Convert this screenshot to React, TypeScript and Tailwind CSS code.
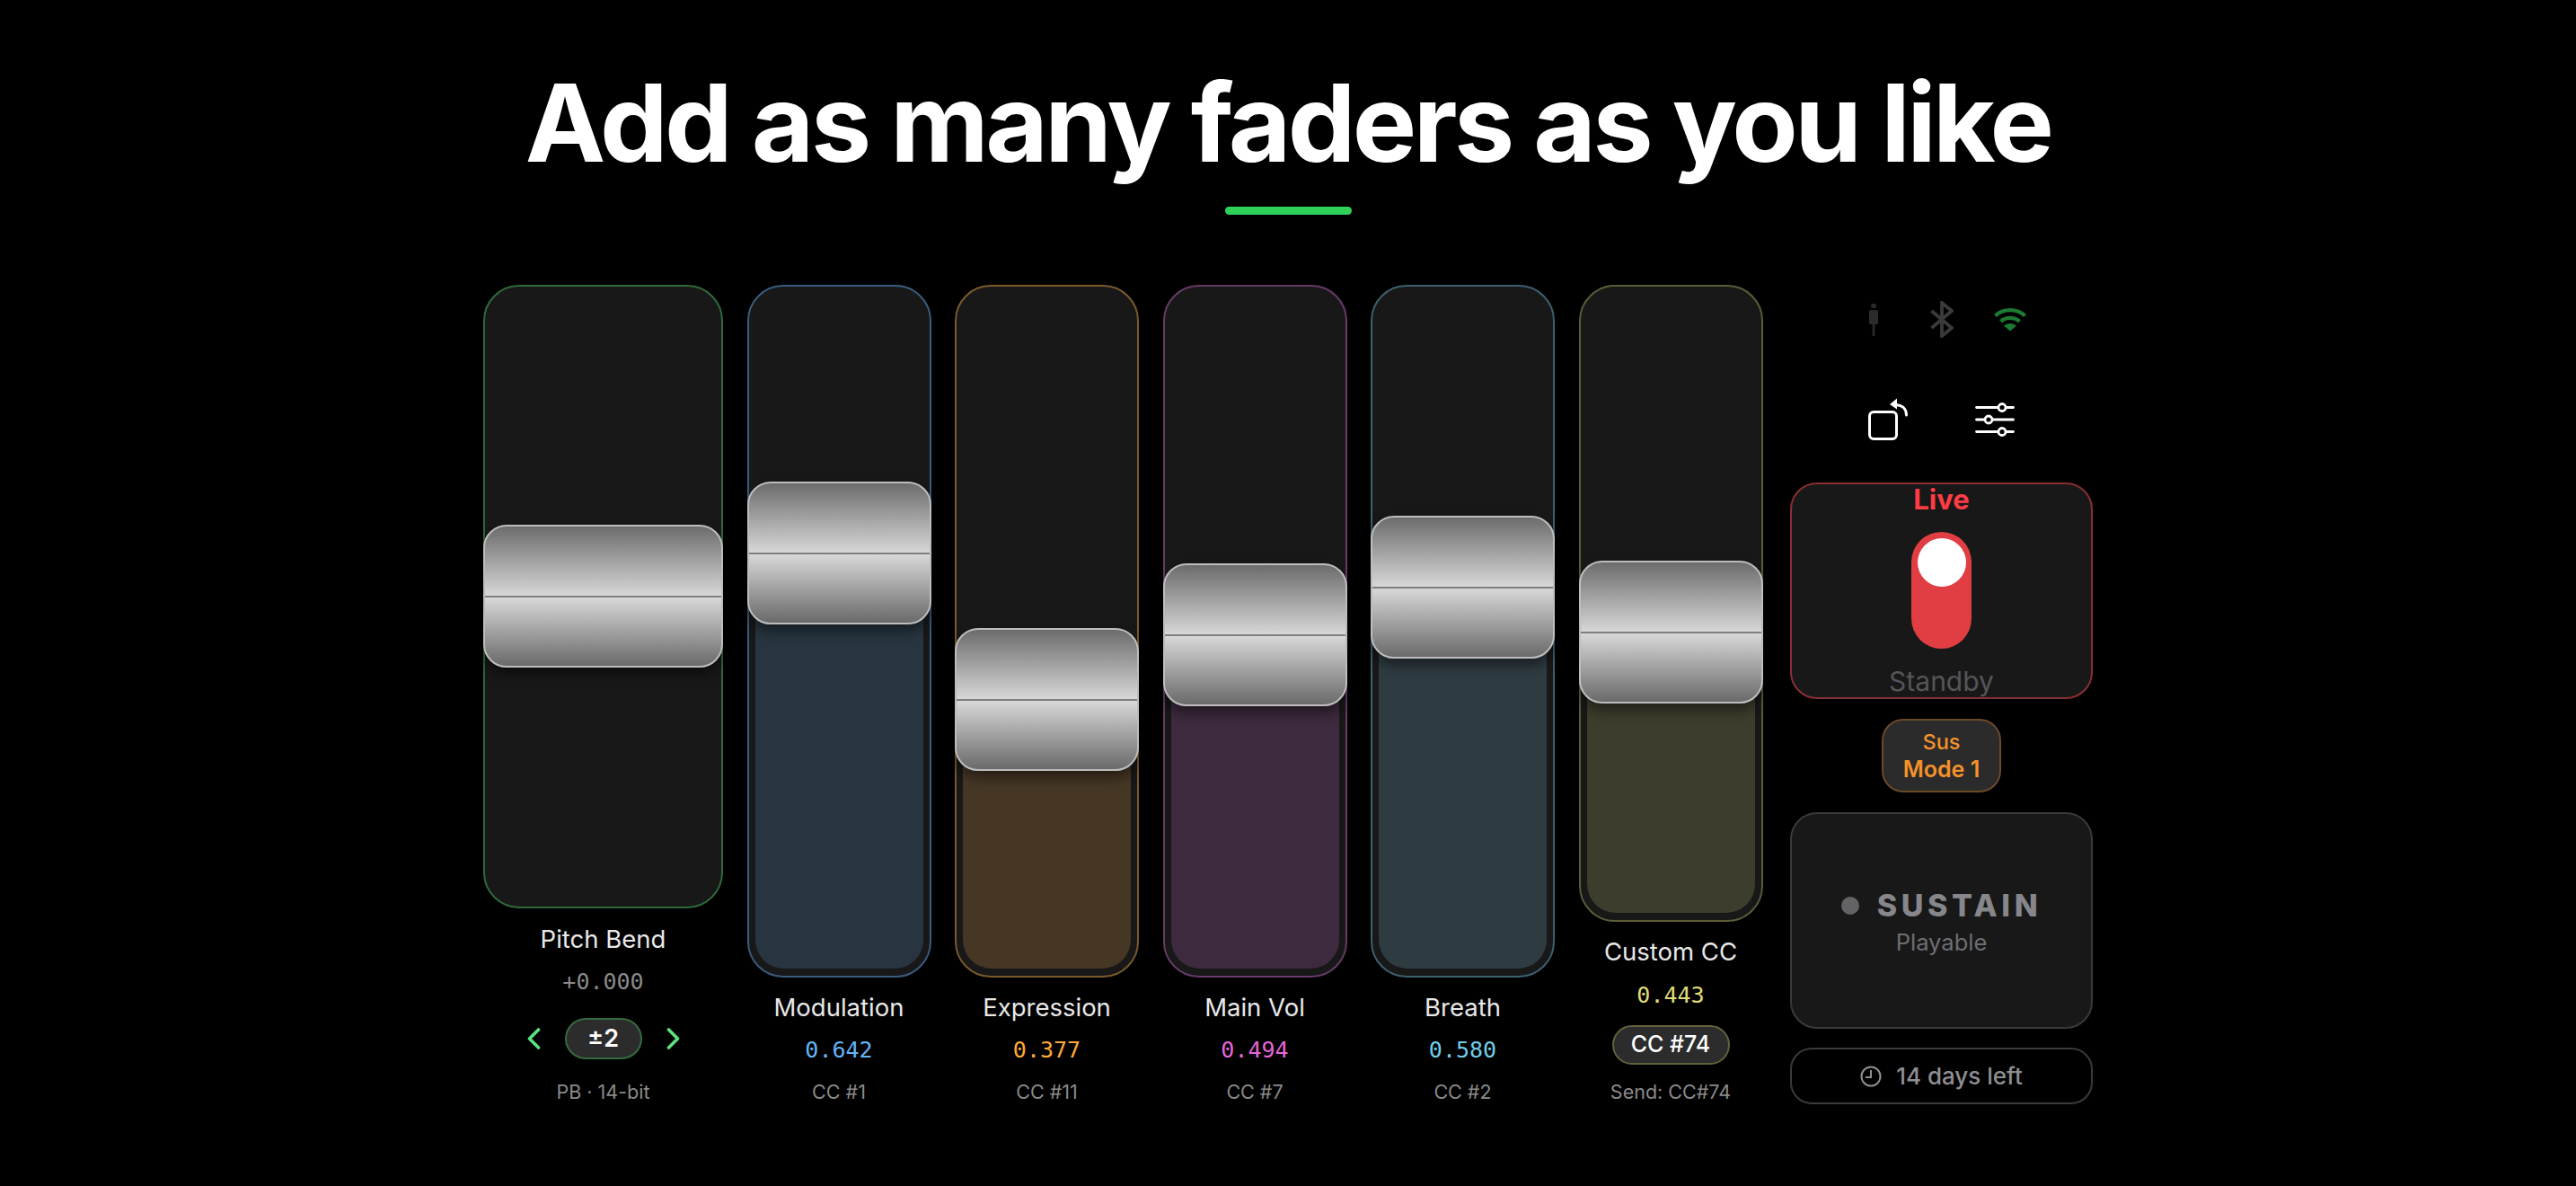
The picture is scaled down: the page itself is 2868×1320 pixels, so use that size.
import React from "react";

type F = {
  label: string; value: string; sub: string; trackH: number; thumbTop: number;
  track: string; fill: string; val: string; extra?: React.ReactNode; labelMt: string; valMt: string; subMt: string;
};

const Chevron = ({ right }: { right?: boolean }) => (
  <svg width="15" height="24" viewBox="0 0 15 24" fill="none" stroke="#5ce27f" strokeWidth="3.6" strokeLinecap="round" strokeLinejoin="round">
    <path d={right ? "M2.5 2 L12.5 12 L2.5 22" : "M12.5 2 L2.5 12 L12.5 22"} />
  </svg>
);

const PitchPill = () => (
  <div className="mt-[25px] flex items-center gap-[27px]">
    <Chevron />
    <div className="flex h-[46px] w-[86px] items-center justify-center rounded-[23px] border-2 border-[#356b40] bg-[#2c2c2c] text-[27px] font-semibold text-white">±2</div>
    <Chevron right />
  </div>
);

const CCPill = () => (
  <div className="mt-[18px] flex h-[44px] w-[131px] items-center justify-center rounded-[22px] border-2 border-[#63623c] bg-[#2c2c2c] text-[25px] font-medium text-white">CC #74</div>
);

const faders: F[] = [
  { label: "Pitch Bend", value: "+0.000", sub: "PB · 14-bit", trackH: 694, thumbTop: 267, track: "w-[267px] border-[#2f6a3b]", fill: "", val: "text-[#8a8a8a]", extra: <PitchPill />, labelMt: "mt-[17px]", valMt: "mt-[16px]", subMt: "mt-[24px]" },
  { label: "Modulation", value: "0.642", sub: "CC #1", trackH: 771, thumbTop: 219, track: "w-[205px] border-[#3a5c7e]", fill: "bg-[#283540]", val: "text-[#64b5f6]", labelMt: "mt-[16px]", valMt: "mt-[16px]", subMt: "mt-[19px]" },
  { label: "Expression", value: "0.377", sub: "CC #11", trackH: 771, thumbTop: 382, track: "w-[205px] border-[#7a5a2c]", fill: "bg-[#463725]", val: "text-[#ffa93a]", labelMt: "mt-[16px]", valMt: "mt-[16px]", subMt: "mt-[19px]" },
  { label: "Main Vol", value: "0.494", sub: "CC #7", trackH: 771, thumbTop: 310, track: "w-[205px] border-[#683a68]", fill: "bg-[#3e2a3e]", val: "text-[#e566d8]", labelMt: "mt-[16px]", valMt: "mt-[16px]", subMt: "mt-[19px]" },
  { label: "Breath", value: "0.580", sub: "CC #2", trackH: 771, thumbTop: 257, track: "w-[205px] border-[#3d6070]", fill: "bg-[#2e3c42]", val: "text-[#74cde8]", labelMt: "mt-[16px]", valMt: "mt-[16px]", subMt: "mt-[19px]" },
  { label: "Custom CC", value: "0.443", sub: "Send: CC#74", trackH: 709, thumbTop: 307, track: "w-[205px] border-[#5c5c38]", fill: "bg-[#3d3d2d]", val: "text-[#e0dc78]", extra: <CCPill />, labelMt: "mt-[16px]", valMt: "mt-[17px]", subMt: "mt-[18px]" },
];

const Fader = ({ f }: { f: F }) => (
  <div className="flex flex-col items-center">
    <div className={`relative rounded-[40px] border-2 bg-[#181818] ${f.track}`} style={{ height: f.trackH }}>
      {f.fill && (
        <div className={`absolute inset-x-[7px] bottom-[8px] rounded-b-[32px] ${f.fill}`} style={{ top: f.thumbTop + 60 }} />
      )}
      <div
        className="absolute -inset-x-[2px] h-[159px] overflow-hidden rounded-[26px] border-2 border-[#bdbdbd] bg-[linear-gradient(180deg,#6c6c6c_0%,#d6d6d6_49%,#d8d8d8_51%,#6a6a6a_100%)] shadow-[0_8px_14px_rgba(0,0,0,0.45)]"
        style={{ top: f.thumbTop - 2 }}
      >
        <div className="absolute inset-x-0 top-1/2 h-[2px] -translate-y-1/2 bg-[#7f7f7f]" />
      </div>
    </div>
    <div className={`h-[34px] text-[27.5px] leading-[34px] text-[#e8e8e8] ${f.labelMt}`}>{f.label}</div>
    <div className={`h-[30px] font-['DejaVu_Sans_Mono',monospace] text-[25px] leading-[30px] ${f.val} ${f.valMt}`}>{f.value}</div>
    {f.extra}
    <div className={`h-[24px] text-[21.5px] leading-[24px] text-[#8a8a8a] ${f.subMt}`}>{f.sub}</div>
  </div>
);

export default function App() {
  return (
    <div className="flex min-h-[1320px] w-full flex-col items-center bg-black font-['Inter',sans-serif]">
      <h1 className="mt-[67px] text-[120px] font-bold leading-[139px] tracking-[-0.03em] text-white">Add as many faders as you like</h1>
      <div className="mt-[24px] h-[9px] w-[141px] rounded-full bg-[#30d158]" />
      <div className="mt-[78px] flex items-start gap-[26.5px]">
        {faders.map((f) => <Fader key={f.label} f={f} />)}
        <div className="ml-[4px] flex w-[337px] flex-col items-center">
          <div className="mt-[18px] flex h-[41px] items-center justify-center">
            <div className="flex w-[76px] justify-center">
              <svg width="10" height="36" viewBox="0 0 10 36" fill="#2b2b2b">
                <rect x="2" y="0" width="6" height="5" rx="2" />
                <rect x="0" y="7" width="10" height="16" rx="1.5" />
                <rect x="3.7" y="23" width="2.6" height="13" />
              </svg>
            </div>
            <div className="flex w-[76px] justify-center">
              <svg width="26" height="41" viewBox="0 0 26 41" fill="none" stroke="#3a3a3a" strokeWidth="3.8">
                <path d="M1.5 11 L24 30 L13 39 V2 L24 11 L1.5 30" />
              </svg>
            </div>
            <div className="flex w-[76px] justify-center">
              <svg width="36" height="27" viewBox="0 0 36 27" fill="none" stroke="#1c7a33" strokeWidth="4.2">
                <path d="M1.5 9.5 C10 1 26 1 34.5 9.5" />
                <path d="M7.5 15.8 C13 10.5 23 10.5 28.5 15.8" />
                <path d="M18 26.5 L11 20.5 C15 17 21 17 25 20.5 Z" fill="#1c7a33" stroke="none" />
              </svg>
            </div>
          </div>
          <div className="mt-[67px] flex h-[47px] items-center gap-[75px]">
            <svg width="44" height="47" viewBox="0 0 44 47" fill="none" stroke="#ffffff" strokeWidth="3">
              <rect x="1.5" y="15.5" width="30" height="30" rx="4.5" />
              <path d="M42.5 19 C42.5 12 38 8 31 7.5" strokeLinecap="round" />
              <path d="M32 0.5 L24 7 L32 12.5 Z" fill="#ffffff" stroke="none" />
            </svg>
            <svg width="44" height="38" viewBox="0 0 44 38" fill="none" stroke="#ffffff" strokeWidth="2.8" strokeLinecap="round">
              <path d="M1.5 5.5 H42.5 M1.5 19 H42.5 M1.5 32.5 H42.5" />
              <circle cx="30" cy="5.5" r="4" fill="#000000" />
              <circle cx="15" cy="19" r="4" fill="#000000" />
              <circle cx="30" cy="32.5" r="4" fill="#000000" />
            </svg>
          </div>
          <div className="mt-[47px] flex h-[241px] w-full flex-col items-center rounded-[30px] border-2 border-[#8a2f33] bg-[#181818]">
            <div className="h-[34px] text-[31px] font-bold leading-[34px] text-[#ff3b46]">Live</div>
            <div className="relative mt-[19px] h-[130px] w-[67px] rounded-full bg-[#e03e43]">
              <div className="absolute left-[7px] top-[7px] size-[54px] rounded-full bg-white" />
            </div>
            <div className="mt-[18px] h-[36px] text-[30px] leading-[36px] text-[#555558]">Standby</div>
          </div>
          <div className="mt-[22px] flex h-[82px] w-[133px] flex-col items-center justify-center rounded-[24px] border-2 border-[#6b4a26] bg-[#2b2b2b] text-[#f5922a]">
            <div className="text-[23.5px] font-medium leading-[30px]">Sus</div>
            <div className="text-[25px] font-semibold leading-[30px]">Mode 1</div>
          </div>
          <div className="mt-[22px] flex h-[241px] w-full flex-col items-center rounded-[30px] border-2 border-[#3a3a3a] bg-[#181818]">
            <div className="mt-[82px] flex items-center gap-[20px]">
              <div className="size-[20px] rounded-full bg-[#636366]" />
              <div className="text-[34px] font-extrabold leading-[40px] tracking-[0.135em] text-[#86868b]">SUSTAIN</div>
            </div>
            <div className="mt-[6px] text-[25.5px] leading-[30px] text-[#6e6e72]">Playable</div>
          </div>
          <div className="mt-[21px] flex h-[63px] w-full items-center justify-center gap-[16px] rounded-[24px] border-2 border-[#3a3a3a]">
            <svg width="24" height="24" viewBox="0 0 24 24" fill="none" stroke="#8e8e93" strokeWidth="2">
              <circle cx="12" cy="12" r="10.5" />
              <path d="M12 5 V13 H6" />
            </svg>
            <div className="text-[26px] font-medium leading-[30px] text-[#8e8e93]">14 days left</div>
          </div>
        </div>
      </div>
    </div>
  );
}
